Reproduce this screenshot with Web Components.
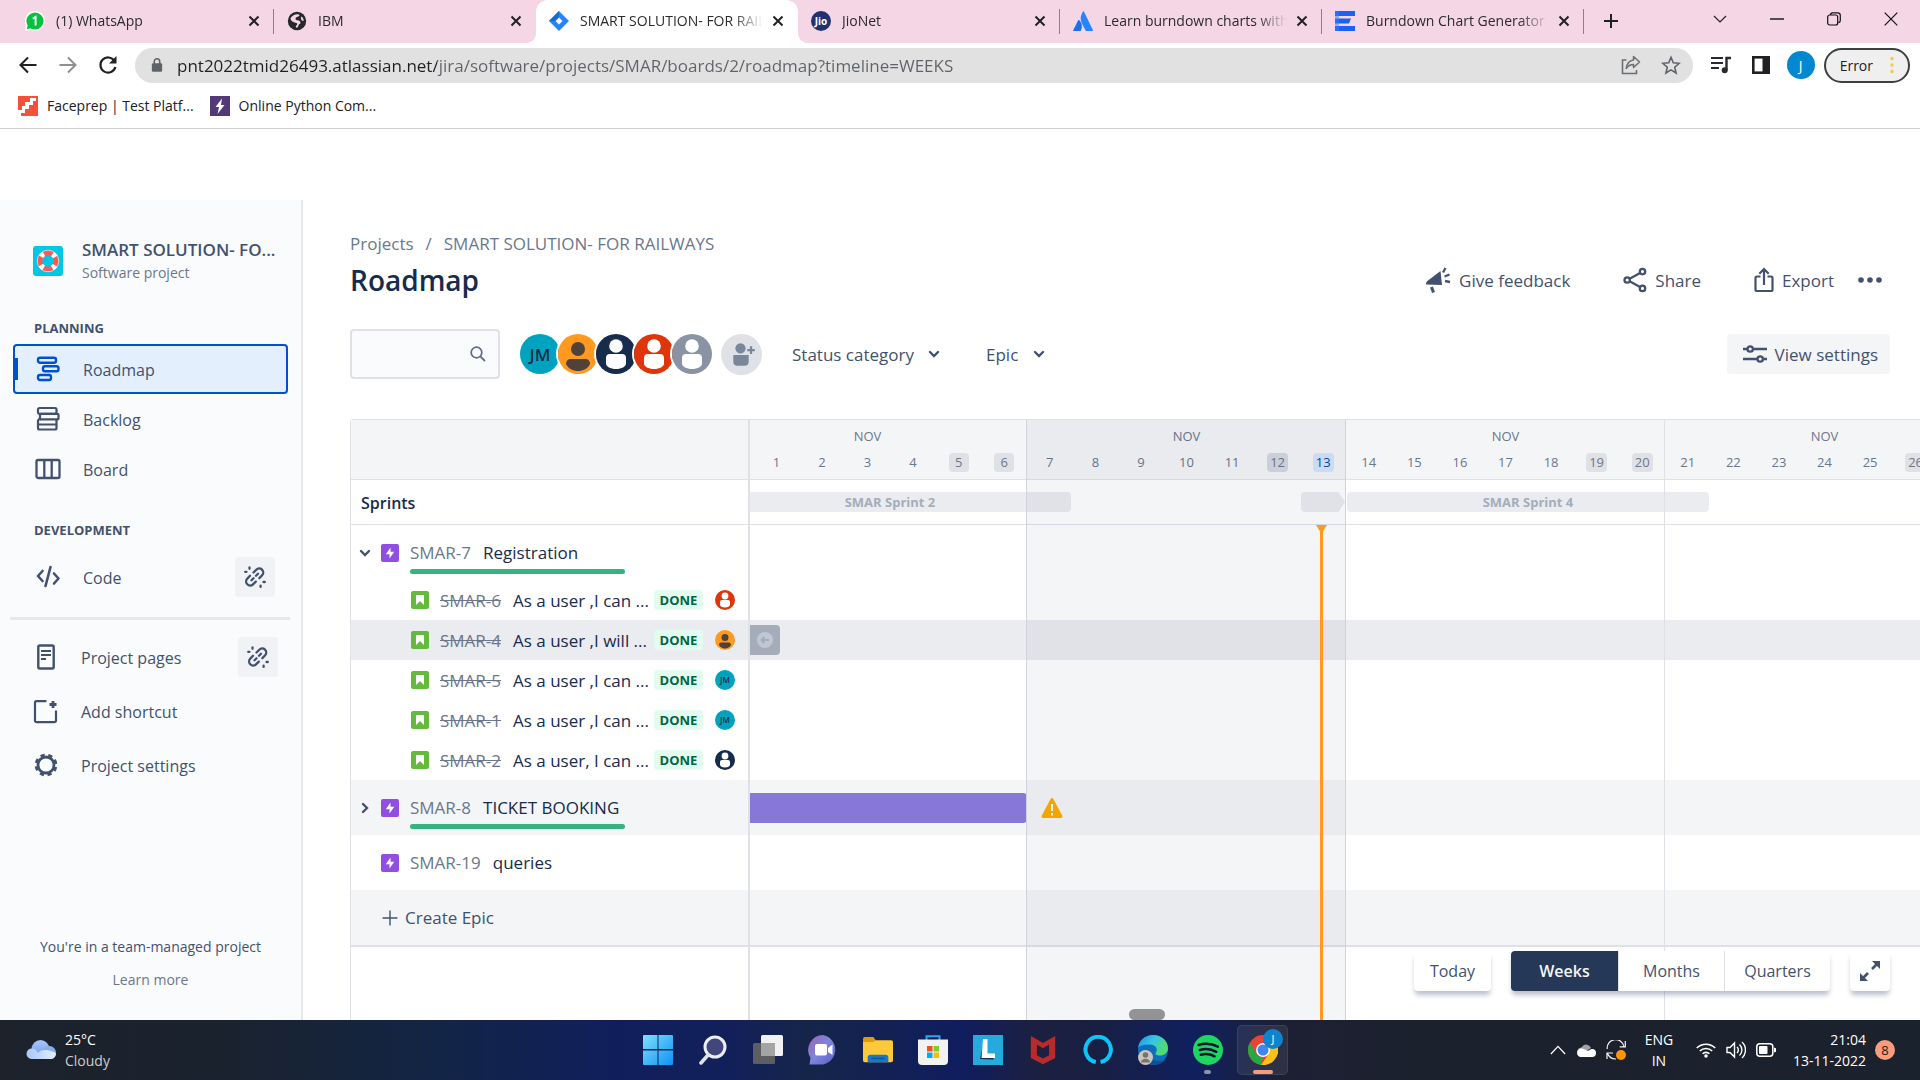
<!DOCTYPE html>
<html lang="en">
<head>
<meta charset="utf-8">
<title>Roadmap</title>
<style>
html, body { margin: 0; height: 100%; }
body { font-family: "Open Sans", "Noto Sans", sans-serif; font-size: 17px; color: #172b4d; background: #fff; overflow: hidden; }
</style>
</head>
<body>
<desktop-screen></desktop-screen>
<script>
const ICONS = {
  whatsapp: ['0 0 20 20', '<path d="M10 0a10 10 0 1 1-4.800 18.800L0 20l1.200-5.200A10 10 0 0 1 10 0z" fill="#fff"/><circle cx="10" cy="10" r="8.600" fill="#09c03e"/><path d="M3 13l-1.200 5.200L7 17z" fill="#09c03e"/><path d="M7.800 7.600L10.600 6v8.500" fill="none" stroke="#fff" stroke-width="1.900"/>'],
  globe: ['0 0 20 20', '<circle cx="10" cy="10" r="9.200" fill="#25272b"/><path d="M3.500 7C5.500 4.500 8 3 11 3.300c1.500.2 2 1.400.8 2-1.600.8-3.500 1-3.300 2.700.3 1.700 4.500.8 5 3.200.4 1.800-1.700 1.800-2.100 3.200-.4 1.500-.8 2.600-2 2.200-.9-.4-.8-1.600.2-2.400 1-.9 1-1.900-.4-2.200C6.500 11.200 3.800 10.500 3.500 7z" fill="#f5d6e4"/><path d="M14.500 5.500c1.500 1 2.200 2.500 2.200 4.500l-1.800-.6c-1-.9-1.400-2.800-.4-3.900z" fill="#f5d6e4"/>'],
  jira: ['0 0 20 20', '<path d="M10 0l10 10-10 10L0 10z" fill="#2684ff"/><path d="M10 0v7L6.500 10 0 10z" fill="#1868db"/><path d="M10 6.500L13.500 10 10 13.500 6.500 10z" fill="#fff"/>'],
  atlassian: ['0 0 20 20', '<path d="M6.300 9.200c-.4-.4-.9-.3-1.100.1L.2 19.200c-.2.4.1.8.5.8h6.900c2.300-4 1.300-8-1.300-10.800z" fill="#1b6fee"/><path d="M10 .5C7 5.500 7.200 9 9.300 13.200l3.300 6.400c.1.300.3.400.6.400h6.300c.4 0 .7-.4.5-.8L10.900.5c-.2-.4-.7-.4-.9 0z" fill="#2684ff"/>'],
  burndown: ['0 0 20 20', '<path d="M0 0h20v5H0zM0 7.500h16l-2 5H0zM0 15h20v5H0z" fill="#1b61f5"/><path d="M0 0h4v20H0z" fill="#3c7dfb" opacity=".5"/>'],
  close: ['0 0 12 12', '<path d="M1.500 1.500l9 9M10.500 1.500l-9 9" fill="none" stroke="#202124" stroke-width="2"/>'],
  plus: ['0 0 16 16', '<path d="M8 1v14M1 8h14" fill="none" stroke="currentColor" stroke-width="2"/>'],
  thinplus: ['0 0 16 16', '<path d="M8 .5v15M.5 8h15" fill="none" stroke="currentColor" stroke-width="1.400"/>'],
  wchev: ['0 0 14 14', '<path d="M1 4l6 6 6-6" fill="none" stroke="#222" stroke-width="1.200"/>'],
  wmin: ['0 0 14 14', '<path d="M0 7h14" stroke="#111" stroke-width="1.400"/>'],
  wmax: ['0 0 14 14', '<rect x=".7" y="3" width="10" height="10" rx="2" fill="none" stroke="#111" stroke-width="1.200"/><path d="M3.500 3c0-1.400.8-2.200 2-2.200h5c1.700 0 2.800 1 2.800 2.700v5c0 1.200-.8 2-2 2.100" fill="none" stroke="#111" stroke-width="1.200"/>'],
  wclose: ['0 0 14 14', '<path d="M.7.700l12.600 12.600M13.300.700L.7 13.300" stroke="#111" stroke-width="1.200"/>'],
  back: ['0 0 20 20', '<path d="M18.500 10H2.500M10 2.500L2.500 10l7.500 7.500" fill="none" stroke="currentColor" stroke-width="2.100"/>'],
  forward: ['0 0 20 20', '<path d="M1.500 10h16M10 2.500l7.500 7.500-7.500 7.500" fill="none" stroke="currentColor" stroke-width="2"/>'],
  reload: ['0 0 20 20', '<path d="M16.500 6A7.600 7.600 0 1 0 17.400 12" fill="none" stroke="#202124" stroke-width="2.200"/><path d="M18.500 1v7.500H11z" fill="#202124"/>'],
  lock: ['0 0 14 18', '<rect x="1" y="7" width="12" height="10" rx="1.500" fill="#5f6368"/><path d="M3.800 8V5a3.200 3.200 0 0 1 6.400 0v3" fill="none" stroke="#5f6368" stroke-width="1.800"/>'],
  share2: ['0 0 20 20', '<path d="M5.500 5H1.500v13.500h14V15" fill="none" stroke="#6b6f74" stroke-width="1.600"/><path d="M12.500 1.500l6 5.500-6 5.500V9.500C9 9.500 7 10.800 5.200 13.500 5.800 9 8.200 5.500 12.500 4.900z" fill="none" stroke="#6b6f74" stroke-width="1.500" stroke-linejoin="round"/>'],
  star: ['0 0 20 20', '<path d="M10 2.300l2.300 5.500 5.900.5-4.500 3.900 1.400 5.800L10 14.900 4.900 18l1.400-5.800-4.500-3.900 5.900-.5z" fill="none" stroke="#5f6368" stroke-width="1.600"/>'],
  music: ['0 0 20 18', '<path d="M0 2h12M0 7h12M0 12h8" stroke="#27292d" stroke-width="2.200"/><path d="M15.500 14V2H20" fill="none" stroke="#27292d" stroke-width="2.400"/><circle cx="13.700" cy="14.300" r="3" fill="#27292d"/>'],
  panel: ['0 0 18 18', '<rect x="1.300" y="1.300" width="15.400" height="15.400" fill="#fff" stroke="#202124" stroke-width="2.600"/><path d="M10.500 0H18v18h-7.500z" fill="#202124"/>'],
  kebab: ['0 0 4 18', '<circle cx="2" cy="2.500" r="1.800" fill="#fbc84d"/><circle cx="2" cy="9" r="1.800" fill="#fbc84d"/><circle cx="2" cy="15.500" r="1.800" fill="#fbc84d"/>'],
  faceprep: ['0 0 20 20', '<path d="M0 0h20v20H0z" fill="#f4513a"/><path d="M0 20v-6h4v-4h3V6h5V2h6v3h-3v4h-4v4H7v4H3v3z" fill="#fff"/>'],
  python: ['0 0 20 20', '<path d="M0 0h20v20H0z" fill="#523a78"/><path d="M12 2.500L5.500 11H9l-1.500 7 7-9H11z" fill="#fff"/>'],
  project: ['0 0 30 30', '<rect width="30" height="30" rx="3" fill="#00c7e5"/><circle cx="15" cy="15" r="8.300" fill="none" stroke="#ff5a4f" stroke-width="5"/><circle cx="15" cy="15" r="8.300" fill="none" stroke="#fff" stroke-width="5.200" stroke-dasharray="4 9.040" stroke-dashoffset="-4.500"/><circle cx="15" cy="15" r="10.800" fill="none" stroke="#e8f6f8" stroke-width=".7"/>'],
  roadmap: ['0 0 24 26', '<g fill="none" stroke="currentColor" stroke-width="2.400"><rect x="2" y="1.700" width="18" height="5" rx="2"/><rect x="7" y="10.300" width="15.500" height="5" rx="2"/><rect x="2" y="19" width="13" height="5" rx="2"/></g>'],
  backlog: ['0 0 24 26', '<g fill="none" stroke="currentColor" stroke-width="2.200"><rect x="2" y="2" width="18.500" height="5.800" rx="1.500"/><rect x="4" y="7.800" width="18.500" height="5.600" rx="1"/><path d="M2 13.400v8.600a1.500 1.500 0 0 0 1.500 1.500H19a1.500 1.500 0 0 0 1.500-1.500v-8.600M2 18.500h18.500M2 13.400h3"/></g>'],
  board: ['0 0 26 26', '<g fill="none" stroke="currentColor" stroke-width="2.300"><rect x="1.500" y="4" width="23" height="18" rx="1.500"/><path d="M9.300 4v18M16.700 4v18"/></g>'],
  code: ['0 0 26 26', '<path d="M7.500 7L3 12l4.500 5M19 9.500l4.500 5-4.500 5M15.500 3l-5 19" fill="none" stroke="currentColor" stroke-width="2.600" stroke-linecap="round" stroke-linejoin="round"/>'],
  unlink: ['0 0 24 24', '<g fill="none" stroke="currentColor" stroke-width="2.300" stroke-linecap="round"><path d="M10.500 7.500l2.800-2.800a4 4 0 0 1 5.800 5.600l-2.700 2.800M12.800 16.600L10 19.300a4 4 0 0 1-5.700-5.700L7 10.800M8.500 15.300l2-2M13 10.800l2-2"/><path d="M6.500 2.500v1.300M2.200 6.800h1.300M20.500 17h1.300M17.600 20.600v1.300"/></g>'],
  pages: ['0 0 20 26', '<rect x="2.300" y="1.500" width="15.400" height="23" rx="1.500" fill="none" stroke="currentColor" stroke-width="2.400"/><path d="M5 7h10M5 11h10M5 15h5" stroke="currentColor" stroke-width="2"/>'],
  shortcut: ['0 0 26 26', '<path d="M13.500 3.200H3.500a1.500 1.500 0 0 0-1.500 1.500v18a1.500 1.500 0 0 0 1.500 1.500h18a1.500 1.500 0 0 0 1.500-1.500V12.500" fill="none" stroke="currentColor" stroke-width="2.200"/><path d="M20 3v7M16.500 6.500h7" stroke="currentColor" stroke-width="2.800"/>'],
  gear: ['0 0 24 24', '<circle cx="12" cy="12" r="8" fill="none" stroke="currentColor" stroke-width="2.800"/><circle cx="12" cy="12" r="10" fill="none" stroke="currentColor" stroke-width="2.800" stroke-dasharray="4.200 3.654" stroke-dashoffset="-2"/>'],
  search: ['0 0 16 16', '<circle cx="6.500" cy="6.500" r="5.300" fill="none" stroke="#5e6c84" stroke-width="1.700"/><path d="M10.300 10.300L15 15" stroke="#5e6c84" stroke-width="1.800"/>'],
  feedback: ['0 0 26 26', '<path d="M15.500 4l1.500 14L1 17.500c0-2 .6-3 2-4z" fill="currentColor"/><path d="M6.500 20l2 5.500" stroke="currentColor" stroke-width="3"/><path d="M18 5.500L20.500 1M19.500 9.500l5-2M20 14l5 1" stroke="currentColor" stroke-width="2.300"/>'],
  share: ['0 0 24 26', '<g fill="none" stroke="currentColor" stroke-width="2.300"><circle cx="4.200" cy="13" r="2.700"/><circle cx="19.500" cy="4.600" r="2.700"/><circle cx="19.500" cy="21.400" r="2.700"/><path d="M6.600 11.700l10.500-5.800M6.600 14.300l10.500 5.800"/></g>'],
  export: ['0 0 20 26', '<path d="M6.500 9.500H3A1.500 1.500 0 0 0 1.500 11v11.500A1.500 1.500 0 0 0 3 24h14a1.500 1.500 0 0 0 1.500-1.500V11A1.500 1.500 0 0 0 17 9.500h-3.500M10 18V2.500M5.300 6.800L10 2l4.700 4.800" fill="none" stroke="currentColor" stroke-width="2.200"/>'],
  dots: ['0 0 24 6', '<g fill="currentColor"><circle cx="3" cy="3" r="2.800"/><circle cx="12" cy="3" r="2.800"/><circle cx="21" cy="3" r="2.800"/></g>'],
  sliders: ['0 0 24 20', '<g fill="none" stroke="currentColor" stroke-width="2.300"><path d="M0 5h4.500M10.500 5H24M0 15h14.500M20.500 15H24"/><circle cx="7.200" cy="5" r="2.700"/><circle cx="17.200" cy="15" r="2.700"/></g>'],
  down: ['0 0 12 12', '<path d="M2 4l4 4 4-4" fill="none" stroke="currentColor" stroke-width="2.400" stroke-linecap="round"/>'],
  right: ['0 0 12 12', '<path d="M4 2l4 4-4 4" fill="none" stroke="currentColor" stroke-width="2.400" stroke-linecap="round"/>'],
  epic: ['0 0 18 18', '<rect width="18" height="18" rx="2" fill="#904ee2"/><path d="M9.500 3.500v4.300h3.800L8.500 14.500v-4.300H4.800z" fill="#fff"/>'],
  story: ['0 0 18 18', '<rect width="18" height="18" rx="2" fill="#63ba3c"/><path d="M5 4h8v10l-4-4-4 4z" fill="#fff"/>'],
  warn: ['0 0 22 20', '<path d="M11 0c.6 0 1 .3 1.300.8l9 17c.5 1-.1 2.200-1.300 2.200H2C.8 20 .2 18.800.7 17.800l9-17C10 .3 10.400 0 11 0z" fill="#ffab00"/><path d="M11 6v7M11 15v2.400" stroke="#fff" stroke-width="2"/>'],
  earlier: ['0 0 16 16', '<circle cx="8" cy="8" r="8" fill="#c1c7d0"/><path d="M12 8H4.500M7.500 5l-3 3 3 3" fill="none" stroke="#a5adba" stroke-width="2"/>'],
  expand: ['0 0 20 20', '<path d="M12 0h8v8zM0 12v8h8z" fill="currentColor"/><path d="M17 3l-5 5M3 17l5-5" stroke="currentColor" stroke-width="2.600"/>'],
  addperson: ['0 0 40 40', '<circle cx="20" cy="20" r="20" fill="#dfe1e6"/><g fill="#7a869a"><circle cx="19" cy="14" r="5"/><path d="M12 20.500h15V27a4 4 0 0 1-4 4h-7a4 4 0 0 1-4-4z"/><path d="M28.200 12h2.200v2.600H33v2.200h-2.600v2.600h-2.200v-2.600h-2.600v-2.200h2.600z"/></g>'],
  cloud: ['0 0 30 20', '<defs><linearGradient id="a" x2="0" y2="1"><stop stop-color="#a9c8fa"/><stop offset="1" stop-color="#6f97ea"/></linearGradient><linearGradient id="b" x1="1" x2="0"><stop stop-color="#e4effe"/><stop offset="1" stop-color="#a7c6f8"/></linearGradient></defs><circle cx="14.500" cy="9" r="9" fill="url(#a)"/><circle cx="23.500" cy="12.500" r="6.500" fill="#86adf2"/><path d="M6 8.500c3 0 4 1.500 6 4.500 1.500-2 4-3 7-3 5 0 10 2 11 3.500 0 3.500-2.500 5.500-5.500 5.500H5.500a5.200 5.200 0 0 1 .5-10.500z" fill="url(#b)"/>'],
  start: ['0 0 30 30', '<defs><linearGradient id="w" x2="1" y2="1"><stop stop-color="#7fe0fb"/><stop offset="1" stop-color="#0c92f5"/></linearGradient></defs><path d="M1 0h13.500v14H0V1a1 1 0 0 1 1-1zM15.500 0H29a1 1 0 0 1 1 1v13H15.500zM0 15.500h14.500V30H1a1 1 0 0 1-1-1zM15.500 15.500H30V29a1 1 0 0 1-1 1H15.500z" fill="url(#w)"/>'],
  tsearch: ['0 0 30 30', '<circle cx="17" cy="12" r="10" fill="#55598a" fill-opacity=".7" stroke="#eceef2" stroke-width="3"/><path d="M10 20l-7 8" stroke="#dfe2e8" stroke-width="3.500" stroke-linecap="round"/>'],
  tasks: ['0 0 30 30', '<rect x="0" y="8" width="22" height="21" rx="1.500" fill="#5c5e62"/><rect x="8" y="0" width="22" height="21" rx="1.500" fill="#f1f1f2"/><path d="M8 8h14v13H8z" fill="#a3a4a6"/>'],
  meet: ['0 0 30 30', '<defs><linearGradient id="m" x2="1" y2="1"><stop stop-color="#9a63b0"/><stop offset=".5" stop-color="#7f85dc"/><stop offset="1" stop-color="#5560c8"/></linearGradient></defs><path d="M15 0a15 15 0 0 1 0 29.500H1.500L2.500 23A15 15 0 0 1 15 0z" fill="url(#m)"/><rect x="7" y="9" width="12" height="11.500" rx="2" fill="#fff"/><path d="M20 13l4.500-3.500v10.500L20 17z" fill="#fff"/>'],
  folder: ['0 0 32 30', '<path d="M0 3a2 2 0 0 1 2-2h9l3 4v4H0z" fill="#e09a0c"/><path d="M0 6.500h11l3-2h16a2 2 0 0 1 2 2V26a2 2 0 0 1-2 2H2a2 2 0 0 1-2-2z" fill="#fdc93a"/><path d="M5 28v-5a3 3 0 0 1 3-3h16a3 3 0 0 1 3 3v5z" fill="#1777c8"/><path d="M9 24h14" stroke="#0b5596" stroke-width="1.500"/>'],
  store: ['0 0 30 30', '<path d="M8.500 6V1.200h13V6" fill="none" stroke="#28a8e8" stroke-width="2"/><path d="M0 4.500h30V26a4 4 0 0 1-4 4H4a4 4 0 0 1-4-4z" fill="#f2f2f3"/><path d="M9 11h5.500v5.500H9z" fill="#f1511b"/><path d="M15.500 11H21v5.500h-5.500z" fill="#80cc28"/><path d="M9 17.500h5.500V23H9z" fill="#00adef"/><path d="M15.500 17.500H21V23h-5.500z" fill="#fbbc09"/>'],
  lapp: ['0 0 30 30', '<path d="M0 0h30v30H0z" fill="#26a9dc"/><path d="M7 24l4-19v14.500h10l-.5 5z" fill="#14305c"/><path d="M10 4h4.500v14.500H22V23H8.500z" fill="#fff"/>'],
  mcafee: ['0 0 28 32', '<path d="M1 1l13 7.500L27 1v23.500l-13 6.800-13-6.800z" fill="#b92b2b"/><path d="M7.500 10l6.500 4 6.500-4v11.500L14 25l-6.500-3.500z" fill="#1d2040"/>'],
  alexa: ['0 0 30 30', '<path d="M12.800 27A12.700 12.700 0 1 1 17.500 27" fill="none" stroke="#0cc6fb" stroke-width="4"/>'],
  edge: ['0 0 30 30', '<defs><linearGradient id="e" x2="1" y2=".5"><stop stop-color="#1b8fe0"/><stop offset=".5" stop-color="#36c5e6"/><stop offset="1" stop-color="#52dc6a"/></linearGradient></defs><circle cx="15" cy="15" r="15" fill="#0f6dc0"/><path d="M0 13C1 5 7.500 0 15 0c8.500 0 15 5.800 15 13 0 5-4 7.500-8 7.500-3.500 0-5.500-1.300-4-3 2.500-4-1-8-6-8C7 9.500 2 10 0 13z" fill="url(#e)"/><path d="M11 14c-2 5 2 12 10 12 3 0 5-1 7-2a15 15 0 0 1-13 6C8 28 6 18 11 14z" fill="#124f95"/><circle cx="7.500" cy="22.500" r="7.500" fill="#c9c5bf"/><circle cx="7.500" cy="20" r="2.800" fill="#77736d"/><path d="M3 27.500c0-5 9-5 9 0z" fill="#77736d"/>'],
  spotify: ['0 0 30 30', '<circle cx="15" cy="15" r="15" fill="#1ed760"/><path d="M5.500 10c6.500-2 13.500-1.500 19.300 1.600M6.800 15c5.500-1.500 11.500-1 16.500 1.800M7.800 19.700c4.500-1.200 9.500-.8 13.700 1.600" fill="none" stroke="#0a1230" stroke-width="2.500" stroke-linecap="round"/>'],
  chrome: ['0 0 30 30', '<circle cx="15" cy="15" r="15" fill="#ea4335"/><path d="M2 7.500L9 20l6 2.500-2 7.400A15 15 0 0 1 2 7.500z" fill="#28a745"/><path d="M15 8h13.300A15 15 0 0 1 13 29.900L20.500 19z" fill="#fbc116"/><circle cx="15" cy="15" r="7" fill="#fff"/><circle cx="15" cy="15" r="5.500" fill="#3f86f4"/>'],
  up: ['0 0 18 12', '<path d="M1 10.500L9 2l8 8.500" fill="none" stroke="#fff" stroke-width="1.400"/>'],
  onedrive: ['0 0 20 14', '<path d="M6 4a5 5 0 0 1 9 1l-6 4-7-3z" fill="#9da2a8"/><path d="M5 14a4.300 4.300 0 0 1-.5-8.500C7 5 9 6.500 11 7.500s3-1.500 5-1.500a4 4 0 0 1 0 8z" fill="#fff"/>'],
  sync: ['0 0 20 20', '<path d="M1.200 9A8.500 8.500 0 0 1 18 6.500M19.300 1v5.800h-5.600M1 19v-6h6M1.500 13.500A9 9 0 0 0 10 19" fill="none" stroke="#f4f4f5" stroke-width="1.200"/><circle cx="15" cy="15" r="5" fill="#ff9500"/>'],
  wifi: ['0 0 20 16' , '<g fill="none" stroke="#fff" stroke-width="1.600"><path d="M.8 6a13 13 0 0 1 18.400 0M3.800 9a8.800 8.800 0 0 1 12.400 0M6.600 11.800a4.800 4.800 0 0 1 6.800 0"/></g><circle cx="10" cy="14" r="1.800" fill="#fff"/>'],
  volume: ['0 0 20 18', '<g fill="none" stroke="#fff" stroke-width="1.400"><path d="M1 6.500h3L8.500 2v14L4 11.500H1z"/><path d="M11 6a4 4 0 0 1 0 6M13.500 3.500a7.500 7.500 0 0 1 0 11M16 1a11 11 0 0 1 0 16"/></g>'],
  battery: ['0 0 20 14', '<rect x=".8" y=".8" width="16" height="12.400" rx="3" fill="none" stroke="#fff" stroke-width="1.500"/><rect x="3" y="3" width="8.500" height="8" rx="1" fill="#fff"/><path d="M18 4.500v5l2-.8V5.300z" fill="#fff"/>']
};

function component(name, css, html) {
  customElements.define(name, class extends HTMLElement {
    constructor() { super(); this.attachShadow({ mode: 'open' }); }
    connectedCallback() {
      const t = document.createElement('template');
      t.innerHTML = `<style>*{box-sizing:border-box}button,input,select{font:inherit;color:inherit;border:0;margin:0;padding:0;background:none}a{color:inherit;text-decoration:none}${css}</style>` + html(this);
      this.shadowRoot.replaceChildren(t.content.cloneNode(true));
    }
  });
}
const attr = (el, n, d = '') => el.getAttribute(n) ?? d;

component('ui-icon', ':host{display:block;flex:none;width:var(--w);height:var(--h)}svg{display:block;width:100%;height:100%}', el => {
  const [w, h = w] = attr(el, 'size', '20').split(' ');
  const [box, body] = ICONS[el.getAttribute('name')];
  return `<style>:host{--w:${w}px;--h:${h}px}</style><svg viewBox="${box}" aria-hidden="true">${body}</svg>`;
});

/* ---------- people ---------- */
component('user-avatar', `
:host{display:block;flex:none}
svg{display:block;border-radius:50%;width:var(--size,40px);height:var(--size,40px)}
.jm{display:grid;place-items:center;width:var(--size,40px);height:var(--size,40px);border-radius:50%;background:#00a3bf;color:#172b4d;font-weight:600;font-size:var(--fs,16px);line-height:1}`, el => {
  const kind = el.getAttribute('kind');
  if (kind === 'jm') return '<span class="jm">JM</span>';
  if (kind === 'orange') return '<svg viewBox="0 0 40 40"><path d="M0 0h40v40H0z" fill="#ff991f"/><circle cx="20" cy="15" r="7" fill="#50413a"/><path d="M8 30c0-3 1.500-5 4.500-5h15c3 0 4.500 2 4.500 5-2 4.500-7 7-12 7s-10-2.500-12-7z" fill="#50413a"/></svg>';
  const bg = { navy: '#172b4d', red: '#de350b', grey: '#8993a4' }[kind];
  return `<svg viewBox="0 0 40 40"><path d="M0 0h40v40H0z" fill="${bg}"/><circle cx="20" cy="12" r="6.800" fill="#fff"/><path d="M10 24a4 4 0 0 1 4-4h12a4 4 0 0 1 4 4v5.500c0 3-4.500 5.500-10 5.500s-10-2.500-10-5.500z" fill="#fff"/></svg>`;
});

/* ---------- browser ---------- */
component('browser-tab', `
:host{display:block;flex:0 1 262px;min-width:0;height:43px;position:relative}
.tab{display:flex;align-items:center;height:43px;padding:0 14px 2px 13px;font-size:14px;color:#2a2b2e}
:host([active]) .tab{background:#fff;border-radius:12px 12px 0 0}
:host([active]) .tab::before,:host([active]) .tab::after{content:"";position:absolute;bottom:0;width:10px;height:10px}
:host([active]) .tab::before{left:-10px;background:radial-gradient(circle at 0 0,transparent 10px,#fff 10px)}
:host([active]) .tab::after{right:-10px;background:radial-gradient(circle at 100% 0,transparent 10px,#fff 10px)}
:host([line])::after{content:"";position:absolute;right:0;top:9px;height:25px;width:1px;background:#8f7f87}
.name{flex:1;min-width:0;display:flex;align-items:center;gap:11px;height:40px;text-align:left;overflow:hidden}
.txt{flex:1;overflow:hidden;white-space:nowrap;-webkit-mask:linear-gradient(90deg,#000 calc(100% - 30px),transparent)}
.x{width:12px;height:12px;margin-left:9px}
.jio{width:20px;height:20px;border-radius:50%;background:#21316f;color:#fff;font-weight:700;font-size:10px;line-height:20px;text-align:center;flex:none}`, el => {
  const i = el.getAttribute('icon');
  return `<div class="tab"><button class="name">${i === 'jio' ? '<span class="jio">Jio</span>' : `<ui-icon name="${i}" size="20"></ui-icon>`}<span class="txt"><slot></slot></span></button><button class="x" aria-label="Close tab"><ui-icon name="close" size="12"></ui-icon></button></div>`;
});

component('browser-chrome', `
:host{display:block;flex:none;border-bottom:1px solid #cfcfcf;background:#fff;color:#202124}
.strip{display:flex;align-items:center;background:#f5d6e4;padding-left:12px;height:43px}
.new{margin:0 0 2px 19px;padding:0}
.win{display:flex;margin:0 22px 6px auto;gap:43px}
.bar{display:flex;align-items:center;height:44px;padding:0 10px 0 18px}
.nav{display:flex;gap:20px;width:117px;flex:none}
.omni{flex:1;display:flex;align-items:center;height:35px;border-radius:18px;background:#e1e1e1;padding:0 12px 0 16px}
.omni input{flex:1;min-width:0;margin-left:14px;outline:0;height:30px;color:transparent;background:linear-gradient(90deg,#202124 260px,#5f6368 260px);-webkit-background-clip:text;background-clip:text}
.omni .i{display:flex;gap:20px}
.ext{display:flex;align-items:center;margin-left:18px;gap:21px}
.j{width:28px;height:28px;border-radius:50%;background:#0288d1;color:#fff;font-size:14px;margin:0 -12px 0 -4px}
.err{display:flex;align-items:center;gap:17px;height:35px;border:2px solid #3c4043;border-radius:18px;background:#efefef;padding:0 14px;font-size:14px}
.marks{display:flex;align-items:center;height:41px;padding:0 18px 4px;gap:16px;font-size:14px}
.marks a{display:flex;align-items:center;gap:9px}`, () => `
<div class="strip">
<browser-tab icon="whatsapp" line>(1) WhatsApp</browser-tab><browser-tab icon="globe">IBM</browser-tab><browser-tab icon="jira" active>SMART SOLUTION- FOR RAILWAYS</browser-tab><browser-tab icon="jio" line>JioNet</browser-tab><browser-tab icon="atlassian" line>Learn burndown charts with Jira</browser-tab><browser-tab icon="burndown" line>Burndown Chart Generator</browser-tab>
<button class="new" aria-label="New tab"><ui-icon name="plus" size="16"></ui-icon></button>
<div class="win"><button aria-label="Search tabs"><ui-icon name="wchev" size="14"></ui-icon></button><button aria-label="Minimise"><ui-icon name="wmin" size="14"></ui-icon></button><button aria-label="Restore"><ui-icon name="wmax" size="14"></ui-icon></button><button aria-label="Close"><ui-icon name="wclose" size="14"></ui-icon></button></div>
</div>
<div class="bar">
<div class="nav"><button aria-label="Back"><ui-icon name="back" size="20"></ui-icon></button><button aria-label="Forward" style="color:#8d8f92"><ui-icon name="forward" size="20"></ui-icon></button><button aria-label="Reload"><ui-icon name="reload" size="20"></ui-icon></button></div>
<div class="omni"><ui-icon name="lock" size="12 16"></ui-icon><input aria-label="Address" value="pnt2022tmid26493.atlassian.net/jira/software/projects/SMAR/boards/2/roadmap?timeline=WEEKS"><div class="i"><button aria-label="Share page"><ui-icon name="share2" size="20"></ui-icon></button><button aria-label="Bookmark"><ui-icon name="star" size="20"></ui-icon></button></div></div>
<div class="ext"><button aria-label="Media"><ui-icon name="music" size="20 18"></ui-icon></button><button aria-label="Side panel"><ui-icon name="panel" size="18"></ui-icon></button><button class="j">J</button><button class="err">Error<ui-icon name="kebab" size="4 18"></ui-icon></button></div>
</div>
<div class="marks"><a href="#"><ui-icon name="faceprep" size="20"></ui-icon>Faceprep | Test Platf...</a><a href="#"><ui-icon name="python" size="20"></ui-icon>Online Python Com...</a></div>`);

/* ---------- sidebar ---------- */
component('nav-item', `
:host{display:block;font-size:16px}
.row{display:flex;align-items:center;height:var(--nav-h,50px);padding:0 var(--nav-r,11px) 0 var(--nav-l,22px);border-radius:4px;border:2px solid transparent;color:#42526e}
a{display:flex;align-items:center;flex:1;gap:22px}
.i{display:grid;place-items:center;width:26px;margin-left:-2px}
.l{padding-top:2px}
:host([selected]) .row{border-color:#0052cc;background:linear-gradient(#0052cc,#0052cc) 0 50%/3px 22px no-repeat,#e4effd}
:host([selected]) .i{color:#0052cc}
button{width:40px;height:40px;border-radius:4px;background:#f1f2f5;display:grid;place-items:center}`, el =>
  `<div class="row"><a href="#"><span class="i"><ui-icon name="${el.getAttribute('icon')}" size="${attr(el, 'size', '24 26')}"></ui-icon></span><span class="l"><slot></slot></span></a>${el.hasAttribute('link') ? '<button aria-label="Connect"><ui-icon name="unlink" size="24"></ui-icon></button>' : ''}</div>`);

component('project-sidebar', `
:host{display:flex;flex-direction:column;flex:none;width:303px;background:#fafbfd;border-right:2px solid #e6e7ea;color:#42526e;padding:38px 13px 24px 13px}
.head{display:flex;align-items:center;gap:19px;padding-left:20px}
.head div{min-width:0}
.t{font-weight:600;line-height:24px;white-space:nowrap}
.s{font-size:14px;line-height:22px;color:#6b778c}
h2{margin:32px 0 4px;padding-left:21px;font-size:13px;font-weight:700;line-height:24px}
h2.second{margin:24px 0 10px}
hr{border:0;height:3px;background:#e7e8eb;margin:15px 0 10px -3px;width:280px}
.more{--nav-h:54px;--nav-l:20px;--nav-r:8px}
.foot{margin-top:auto;text-align:center;font-size:14px;line-height:33px;display:flex;flex-direction:column}
.foot a{color:#6b778c;font-weight:500}`, () => `
<div class="head"><ui-icon name="project" size="30"></ui-icon><div><div class="t">SMART SOLUTION- FO...</div><div class="s">Software project</div></div></div>
<h2>PLANNING</h2>
<nav-item icon="roadmap" selected>Roadmap</nav-item><nav-item icon="backlog">Backlog</nav-item><nav-item icon="board" size="26">Board</nav-item>
<h2 class="second">DEVELOPMENT</h2>
<nav-item icon="code" size="26" link>Code</nav-item>
<hr>
<div class="more"><nav-item icon="pages" size="20 26" link>Project pages</nav-item><nav-item icon="shortcut" size="26">Add shortcut</nav-item><nav-item icon="gear" size="24">Project settings</nav-item></div>
<div class="foot"><span>You're in a team-managed project</span><a href="#">Learn more</a></div>`);

/* ---------- page header ---------- */
component('page-header', `
:host{display:block;padding:32px 38px 0 0}
nav{display:flex;gap:12px;line-height:24px;color:#6b778c}
.line{display:flex;align-items:center;justify-content:space-between;margin-top:6px}
h1{margin:0;font-size:28px;line-height:36px;font-weight:600;color:#172b4d}
.acts{display:flex;align-items:center;gap:53px;color:#42526e;font-weight:500}
.acts button{display:flex;align-items:center;gap:8px}
.acts .d{margin-left:-29px}`, () => `
<nav aria-label="Breadcrumb"><a href="#">Projects</a><span>/</span><a href="#">SMART SOLUTION- FOR RAILWAYS</a></nav>
<div class="line"><h1>Roadmap</h1><div class="acts"><button><ui-icon name="feedback" size="26"></ui-icon>Give feedback</button><button><ui-icon name="share" size="24 26"></ui-icon>Share</button><button><ui-icon name="export" size="20 26"></ui-icon>Export</button><button class="d" aria-label="More"><ui-icon name="dots" size="24 6"></ui-icon></button></div></div>`);

component('filter-bar', `
:host{display:flex;align-items:center;margin-top:31px;padding-right:30px;color:#42526e;font-weight:500}
.search{display:flex;align-items:center;width:150px;height:50px;border:2px solid #dfe1e6;border-radius:4px;background:#fafbfc;padding:0 12px}
.search input{flex:1;min-width:0;outline:0}
.people{display:flex;margin:0 13px 0 18px}
.people user-avatar{border:2px solid #fff;border-radius:50%;margin-right:-6px;width:44px;--fs:17px}
.sel{display:flex;align-items:center;gap:14px;margin-left:30px}
.sel+.sel{margin-left:46px}
select{appearance:none;outline:0}
.view{margin-left:auto;display:flex;align-items:center;gap:8px;height:40px;padding:0 12px 0 16px;border-radius:4px;background:#f4f5f7}`, () => `
<label class="search"><input type="search" aria-label="Search roadmap"><ui-icon name="search" size="16"></ui-icon></label>
<div class="people"><user-avatar kind="jm"></user-avatar><user-avatar kind="orange"></user-avatar><user-avatar kind="navy"></user-avatar><user-avatar kind="red"></user-avatar><user-avatar kind="grey"></user-avatar></div>
<button aria-label="Add people"><ui-icon name="addperson" size="41"></ui-icon></button>
<label class="sel"><select aria-label="Status category"><option>Status category</option></select><ui-icon name="down" size="12"></ui-icon></label>
<label class="sel"><select aria-label="Epic"><option>Epic</option></select><ui-icon name="down" size="12"></ui-icon></label>
<button class="view"><ui-icon name="sliders" size="24 20"></ui-icon>View settings</button>`);

/* ---------- roadmap ---------- */
component('epic-row', `
:host{display:flex;align-items:center;height:55px;padding:0 13px 0 8px;white-space:nowrap}
:host([tint]){background:#f4f5f7}
.c{width:12px;height:12px;margin-right:10px;color:#42526e}
.b{margin-left:11px;position:relative}
.k{color:#6b778c;margin-right:12px}
.bar{position:absolute;left:0;top:28px;width:215px;height:5px;border-radius:3px;background:#36b37e}`, el => `
<button class="c" aria-label="Toggle">${el.hasAttribute('state') ? `<ui-icon name="${el.getAttribute('state')}" size="12"></ui-icon>` : ''}</button>
<ui-icon name="epic" size="18"></ui-icon>
<div class="b"><div><span class="k">${el.getAttribute('key')}</span><slot></slot></div>${el.hasAttribute('state') ? '<div class="bar"></div>' : ''}</div>`);

component('story-row', `
:host{display:flex;align-items:center;height:40px;padding:0 13px 0 60px;white-space:nowrap}
:host([hover]){background:#ebecf0}
.k{color:#6b778c;text-decoration:line-through;width:64px;margin:0 9px 0 11px}
.s{flex:1;min-width:0}
.done{width:49px;height:20px;border-radius:4px;background:#e3fcef;color:#006644;font-size:13px;font-weight:700;line-height:20px;text-align:center;margin-right:12px}
user-avatar{--size:20px;--fs:8px}`, el => `
<ui-icon name="story" size="18"></ui-icon><span class="k">${el.getAttribute('key')}</span><span class="s"><slot></slot></span><span class="done">DONE</span><user-avatar kind="${el.getAttribute('who')}"></user-avatar>`);

component('epic-list', `
:host{display:flex;flex-direction:column;flex:none;width:400px;border-left:1px solid #dfe1e6;border-right:2px solid #dfe1e6;border-top:1px solid #dfe1e6;border-radius:4px 0 0 0}
.head{height:60px;background:#f4f5f7;border-bottom:1px solid #dfe1e6}
.sprints{height:45px;line-height:46px;padding-left:10px;border-bottom:1px solid #dfe1e6;font-size:16px;font-weight:600}
.create{display:flex;align-items:center;gap:7px;width:100%;height:57px;padding-left:31px;background:#f4f5f7;border-bottom:2px solid #dfe1e6;color:#42526e;font-weight:500}`, () => `
<div class="head"></div><div class="sprints">Sprints</div>
<epic-row key="SMAR-7" state="down">Registration</epic-row>
<story-row key="SMAR-6" who="red">As a user ,I can ...</story-row>
<story-row key="SMAR-4" who="orange" hover>As a user ,I will ...</story-row>
<story-row key="SMAR-5" who="jm">As a user ,I can ...</story-row>
<story-row key="SMAR-1" who="jm">As a user ,I can ...</story-row>
<story-row key="SMAR-2" who="navy">As a user, I can ...</story-row>
<epic-row key="SMAR-8" state="right" tint>TICKET BOOKING</epic-row>
<epic-row key="SMAR-19">queries</epic-row>
<button class="create"><ui-icon name="thinplus" size="16"></ui-icon>Create Epic</button>`);

component('week-header', `
:host{display:block;flex:none;width:319px;padding-top:6px;font-size:13px;color:#6b778c;text-align:center}
.m{line-height:20px;height:27px}
.d{display:grid;grid-template-columns:repeat(7,1fr);justify-items:center}
.d span{min-width:20px;height:19px;line-height:19px;padding:0 3px;border-radius:4px}
.we{background:#dfe1e6}
:host([now]) .we{background:#d6d8df}
.d .today{background:#d6e4fb;color:#0747a6}`, el => {
  const s = +el.getAttribute('start'), last = +attr(el, 'last', s + 6);
  let out = '';
  for (let n = s, i = 0; n <= last; n++, i++) out += `<span class="${n === 13 ? 'today' : i > 4 ? 'we' : ''}">${n < 1 ? '' : n}</span>`;
  return `<div class="m">NOV</div><div class="d">${out}</div>`;
});

component('time-line', `
:host{display:flex;flex-direction:column;flex:1;min-width:0;position:relative;overflow:hidden;border-top:1px solid #dfe1e6}
.head,.sprints,.weeks{display:flex}
.head>*,.sprints>*{flex:none}
.head{height:60px;background:#f4f5f7;border-bottom:1px solid #dfe1e6}
.head week-header:first-child,.weeks i:first-child{margin-left:-42px}
.sprints{height:45px;align-items:center;border-bottom:1px solid #dfe1e6}
.s{width:362px;height:20px;border-radius:4px;background:#ebecf0;color:#a5adba;font-size:13px;font-weight:700;line-height:20px;text-align:center}
.s.first{margin-left:-41px;margin-right:230px}
.s.mid{width:44px;margin-right:2px;clip-path:polygon(0 0,85% 0,100% 50%,85% 100%,0 100%)}
.r{height:55px;display:flex;align-items:center}
.st{height:40px}
.hover{background:#ebecf0}.tint{background:#f4f5f7}
.end{height:57px;border-bottom:2px solid #dfe1e6}
.early{display:grid;place-items:center;width:30px;height:30px;border-radius:0 4px 4px 0;background:#a5adba}
.bar{width:277px;height:30px;border-radius:0 4px 4px 0;background:#8777d9;margin-right:14px}
.weeks{position:absolute;inset:0;pointer-events:none}
.weeks i{flex:none;width:319px;border-right:1px solid #dfe1e6}
.weeks i.now{background:rgba(9,30,66,.043)}
.weeks i:nth-child(-n+2){border-color:#d0d3dc}
.today{position:absolute;top:105px;bottom:0;left:570px;width:3px;background:#ff991f}
.today::before{content:"";position:absolute;left:-4px;top:0;border:5px solid transparent;border-top:8px solid #ff991f;border-bottom:0;width:1px}
.modes{position:absolute;right:30px;bottom:29px;display:flex;gap:20px;color:#42526e;font-size:16px;font-weight:500}
.g{display:flex;border-radius:4px;background:#fff;box-shadow:0 5px 5px -1px rgba(9,30,66,.28)}
.g button{height:40px;min-width:106px}
.g button+button{border-left:1px solid #dfe1e6}
.g .one{min-width:77px}.g .sq{min-width:40px;display:grid;place-items:center}
.g .on{min-width:107px;background:#253858;color:#f4f5f7;font-weight:600;border-radius:4px 0 0 4px}
.thumb{position:absolute;left:379px;bottom:0;width:36px;height:11px;border-radius:6px;background:#929395}`, () => `
<div class="head"><week-header start="0"></week-header><week-header start="7" now></week-header><week-header start="14"></week-header><week-header start="21" last="26"></week-header></div>
<div class="sprints"><div class="s first">SMAR Sprint 2</div><div class="s mid"></div><div class="s">SMAR Sprint 4</div></div>
<div class="r"></div><div class="r st"></div><div class="r st hover"><div class="early"><ui-icon name="earlier" size="16"></ui-icon></div></div><div class="r st"></div><div class="r st"></div><div class="r st"></div>
<div class="r tint"><div class="bar"></div><ui-icon name="warn" size="22 20"></ui-icon></div><div class="r"></div><div class="r tint end"></div>
<div class="weeks"><i></i><i class="now"></i><i></i><i></i></div>
<div class="today"></div><div class="thumb"></div>
<div class="modes"><div class="g"><button class="one">Today</button></div><div class="g"><button class="on">Weeks</button><button>Months</button><button>Quarters</button></div><div class="g"><button class="sq" aria-label="Full screen"><ui-icon name="expand" size="20"></ui-icon></button></div></div>`);

component('jira-app', `
:host{display:flex;flex:1;min-height:0;padding-top:71px;background:#fff}
main{flex:1;min-width:0;display:flex;flex-direction:column;padding-left:47px}
.chart{display:flex;flex:1;min-height:0;margin-top:40px}`, () => `
<project-sidebar></project-sidebar>
<main><page-header></page-header><filter-bar></filter-bar><div class="chart"><epic-list></epic-list><time-line></time-line></div></main>`);

/* ---------- taskbar ---------- */
component('task-bar', `
:host{display:grid;grid-template-columns:1fr auto 1fr;align-items:center;flex:none;height:60px;color:#fff;font-size:14px;line-height:21px;background:linear-gradient(90deg,#1d222b 0,#1a222f 12%,#132544 22%,#101f5c 32%,#12205a 38%,#152549 42%,#101d5f 50%,#1c2040 54%,#191f42 57%,#10205f 62%,#1d2034 67%,#1b212d 74%,#1a222d 100%)}
.w{display:flex;align-items:center;gap:9px;padding-left:26px}
.w small{display:block;font-size:14px;color:#c9ccd1}
.apps{display:flex}
.apps button{position:relative;width:55px;height:60px;display:grid;place-items:center}
.apps .run::after{content:"";position:absolute;bottom:6px;left:50%;margin-left:-4px;width:7px;height:4px;border-radius:2px;background:#8f93ab}
.apps .on::before{content:"";position:absolute;inset:5px 2px;border-radius:5px;background:rgba(255,255,255,.08);border:1px solid rgba(255,255,255,.08)}
.apps .on::after{width:20px;margin-left:-10px;background:#f79a7e}
.apps ui-icon{position:relative}
.j{position:absolute;right:7px;top:9px;width:20px;height:20px;border-radius:50%;background:#0f83cc;font-size:11px;line-height:20px}
.tray{display:flex;align-items:center;justify-content:flex-end;padding-right:25px;text-align:center}
.tray ui-icon{margin-left:10px}
.lang{margin:0 22px 0 18px;width:30px}.lang+ui-icon{margin-left:0}
.time{text-align:right;margin:0 9px 0 17px}
.n{width:20px;height:20px;border-radius:50%;background:#f99b7d;color:#2a1a16;font-size:13px;line-height:20px}`, () => `
<div class="w"><ui-icon name="cloud" size="30 20"></ui-icon><div>25°C<small>Cloudy</small></div></div>
<div class="apps">${['start', 'tsearch', 'tasks', 'meet', 'folder', 'store', 'lapp', 'mcafee', 'alexa', 'edge'].map(n => `<button aria-label="${n}"><ui-icon name="${n}" size="30"></ui-icon></button>`).join('')}<button class="run" aria-label="Spotify"><ui-icon name="spotify" size="30"></ui-icon></button><button class="run on" aria-label="Chrome"><ui-icon name="chrome" size="30"></ui-icon><span class="j">J</span></button></div>
<div class="tray"><ui-icon name="up" size="16 12"></ui-icon><ui-icon name="onedrive" size="20 14"></ui-icon><ui-icon name="sync" size="20"></ui-icon><div class="lang">ENG<br>IN</div><ui-icon name="wifi" size="20 16"></ui-icon><ui-icon name="volume" size="20 18"></ui-icon><ui-icon name="battery" size="20 14"></ui-icon><div class="time">21:04<br>13-11-2022</div><div class="n">8</div></div>`);

component('desktop-screen', ':host{display:flex;flex-direction:column;height:100vh}', () => '<browser-chrome></browser-chrome><jira-app></jira-app><task-bar></task-bar>');
</script>
</body>
</html>
